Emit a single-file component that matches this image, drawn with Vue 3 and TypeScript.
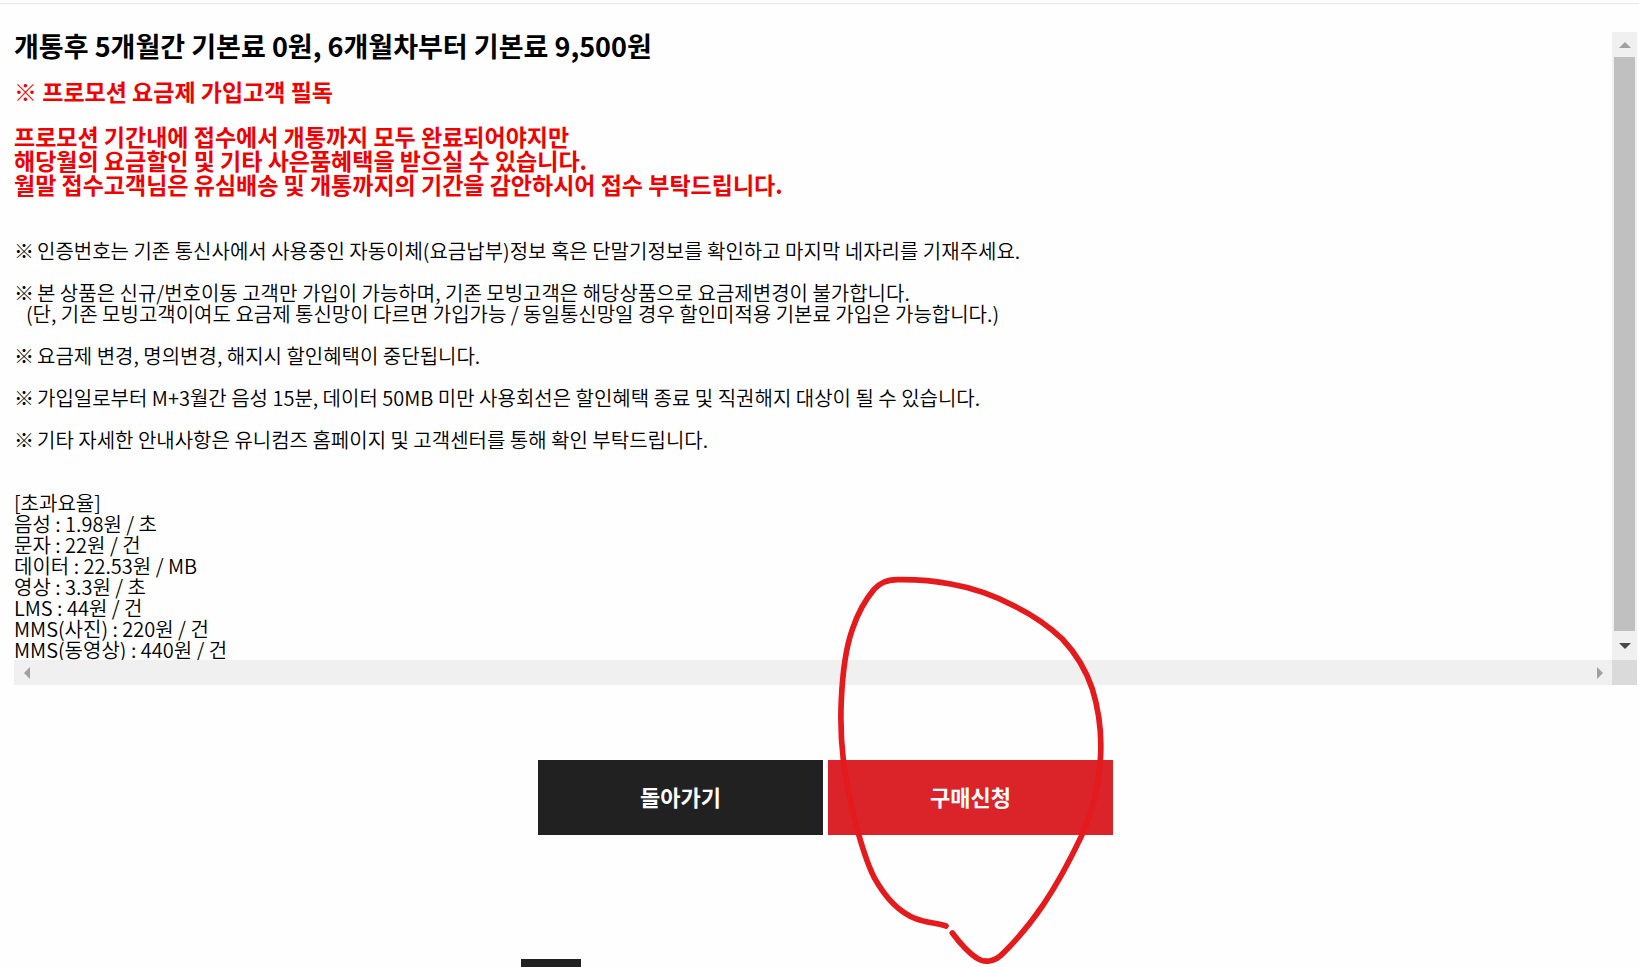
<script setup lang="ts">
const warning: string[] = [
  '프로모션 기간내에 접수에서 개통까지 모두 완료되어야지만',
  '해당월의 요금할인 및 기타 사은품혜택을 받으실 수 있습니다.',
  '월말 접수고객님은 유심배송 및 개통까지의 기간을 감안하시어 접수 부탁드립니다.',
]

interface Note {
  text: string
  detail?: string
}

const notes: Note[] = [
  { text: '인증번호는 기존 통신사에서 사용중인 자동이체(요금납부)정보 혹은 단말기정보를 확인하고 마지막 네자리를 기재주세요.' },
  {
    text: '본 상품은 신규/번호이동 고객만 가입이 가능하며, 기존 모빙고객은 해당상품으로 요금제변경이 불가합니다.',
    detail: '(단, 기존 모빙고객이여도 요금제 통신망이 다르면 가입가능 / 동일통신망일 경우 할인미적용 기본료 가입은 가능합니다.)',
  },
  { text: '요금제 변경, 명의변경, 해지시 할인혜택이 중단됩니다.' },
  { text: '가입일로부터 M+3월간 음성 15분, 데이터 50MB 미만 사용회선은 할인혜택 종료 및 직권해지 대상이 될 수 있습니다.' },
  { text: '기타 자세한 안내사항은 유니컴즈 홈페이지 및 고객센터를 통해 확인 부탁드립니다.' },
]

const rates: string[] = [
  '[초과요율]',
  '음성 : 1.98원 / 초',
  '문자 : 22원 / 건',
  '데이터 : 22.53원 / MB',
  '영상 : 3.3원 / 초',
  'LMS : 44원 / 건',
  'MMS(사진) : 220원 / 건',
  'MMS(동영상) : 440원 / 건',
]
</script>

<template>
  <main class="page">
    <section class="viewer">
      <div class="terms">
        <h1>개통후 5개월간 기본료 0원, 6개월차부터 기본료 9,500원</h1>
        <h2>※ 프로모션 요금제 가입고객 필독</h2>
        <p class="warning">
          <span v-for="line in warning" :key="line" class="line">{{ line }}</span>
        </p>
        <ul class="notes">
          <li v-for="note in notes" :key="note.text">
            <span class="line"><span class="mark">※</span>{{ note.text }}</span>
            <span v-if="note.detail" class="line detail">{{ note.detail }}</span>
          </li>
        </ul>
        <p class="rates">
          <span v-for="rate in rates" :key="rate" class="line">{{ rate }}</span>
        </p>
      </div>
      <div class="bar vertical">
        <button type="button" class="arrow" aria-label="위로">
          <svg viewBox="0 0 12 6" width="12" height="6"><path d="M0 6 6 0l6 6z" fill="#a0a0a0" /></svg>
        </button>
        <div class="thumb"></div>
        <button type="button" class="arrow down" aria-label="아래로">
          <svg viewBox="0 0 12 6" width="12" height="6"><path d="M0 0h12L6 6z" fill="#484848" /></svg>
        </button>
      </div>
      <div class="bar horizontal">
        <button type="button" class="arrow" aria-label="왼쪽으로">
          <svg viewBox="0 0 6 12" width="6" height="12"><path d="M6 0v12L0 6z" fill="#a0a0a0" /></svg>
        </button>
        <button type="button" class="arrow" aria-label="오른쪽으로">
          <svg viewBox="0 0 6 12" width="6" height="12"><path d="M0 0l6 6-6 6z" fill="#a0a0a0" /></svg>
        </button>
      </div>
      <div class="corner"></div>
    </section>

    <div class="actions">
      <button type="button" class="action back">돌아가기</button>
      <div class="apply-wrap">
        <button type="button" class="action apply">구매신청</button>
        <svg class="circle" viewBox="0 0 900 1221" width="300" height="407" aria-hidden="true">
          <path
            d="M378 1098C350 1089 317 1088 287 1076C233 1055 196 1012 164 955C141 912 128 865 115 820C98 755 77 665 70 600C63 540 61 480 64 420C68 330 78 262 97 208C113 160 137 118 162 88C180 69 198 60 232 59C290 58 340 62 392 72C450 82 522 106 583 138C640 166 688 200 727 237C775 288 800 336 817 387C838 455 846 530 841 600C836 690 812 768 785 827C748 905 712 972 670 1034C632 1090 597 1133 550 1179C523 1208 492 1209 470 1194C445 1178 418 1147 397 1119"
          />
        </svg>
      </div>
    </div>

    <footer class="footer"><div class="tile"></div></footer>
  </main>
</template>

<style>
body {
  margin: 0;
  background: #fff;
}
</style>

<style scoped>
.page {
  box-sizing: border-box;
  display: flex;
  flex-direction: column;
  height: 100vh;
  overflow: hidden;
  padding: 32px 2px 0 14px;
  color: #000;
  background: linear-gradient(#e8e8e8, #e8e8e8) 0 3px / 100% 1px no-repeat #fefefe;
  font-family: "Noto Sans CJK KR", "Noto Sans", sans-serif;
}

.viewer {
  flex: none;
  display: grid;
  grid-template-columns: minmax(0, 1fr) 25px;
  grid-template-rows: 628px 25px;
}

.terms {
  overflow: hidden;
  font-size: 20px;
  font-weight: 350;
  line-height: 21px;
  white-space: nowrap;
}

h1,
h2,
p,
ul {
  margin: 0;
  padding: 0;
}

h1 {
  font-size: 27px;
  font-weight: 700;
  line-height: 28px;
}

h2,
.warning {
  color: #f00000;
  font-size: 23px;
  font-weight: 700;
  line-height: 24px;
}

h2 {
  margin-top: 19px;
}

.warning {
  margin-top: 21px;
}

.line {
  display: block;
}

.notes {
  display: grid;
  gap: 21px;
  margin-top: 44px;
  list-style: none;
}

.mark {
  display: inline-block;
  width: 23px;
}

.detail {
  padding-left: 12px;
}

.rates {
  margin-top: 42px;
}

.bar {
  display: flex;
  justify-content: space-between;
  background: #f0f0f0;
}

.vertical {
  flex-direction: column;
}

.arrow {
  display: flex;
  flex: none;
  align-items: center;
  justify-content: center;
  width: 25px;
  height: 25px;
  padding: 0;
  border: 0;
  background: none;
}

.down {
  height: 29px;
}

.thumb {
  flex: 1;
  margin: 0 2px;
  background: #c0c0c0;
}

.corner {
  background: #dadada;
}

.actions {
  flex: none;
  display: flex;
  justify-content: center;
  gap: 5px;
  margin-top: 75px;
}

.action {
  display: block;
  width: 285px;
  height: 75px;
  padding: 0 0 4px;
  border: 0;
  color: #fff;
  font-family: inherit;
  font-size: 22px;
  font-weight: 700;
  line-height: 24px;
}

.back {
  background: #212121;
}

.apply {
  background: #db2429;
}

.apply-wrap {
  position: relative;
}

.circle {
  position: absolute;
  top: -200px;
  left: -8px;
  pointer-events: none;
}

.circle path {
  fill: none;
  stroke: #e51a1c;
  stroke-width: 17;
  stroke-linecap: round;
  stroke-linejoin: round;
}

.footer {
  flex: none;
  width: 609px;
  margin: 124px auto 0;
}

.tile {
  width: 60px;
  height: 60px;
  background: #212121;
}
</style>
